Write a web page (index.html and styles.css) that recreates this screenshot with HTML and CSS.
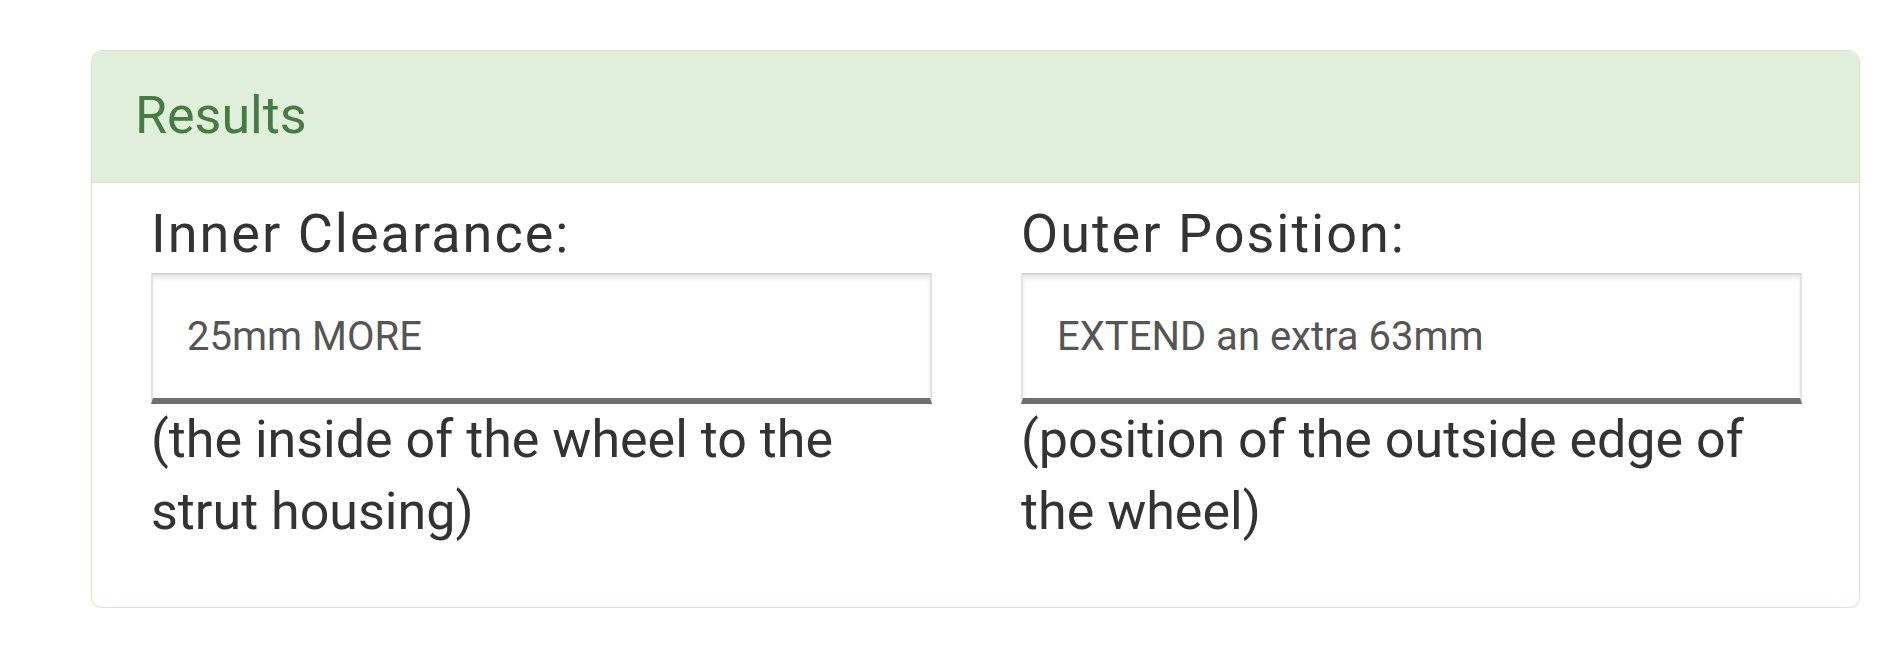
FILE: index.html
```html
<!DOCTYPE html>
<html lang="en">
<head>
    <meta charset="UTF-8">
    <meta name="viewport" content="width=device-width, initial-scale=1.0">
    <title>Results</title>
    <link rel="stylesheet" href="styles.css">
</head>
<body>
    <main>
        <section class="panel">
            <header class="panel-heading">
                <h3>Results</h3>
            </header>
            <div class="panel-body">
                <div class="field">
                    <label for="inner">Inner Clearance:</label>
                    <input type="text" id="inner" value="25mm MORE" readonly>
                    <p class="help">(the inside of the wheel to the strut housing)</p>
                </div>
                <div class="field">
                    <label for="outer">Outer Position:</label>
                    <input type="text" id="outer" value="EXTEND an extra 63mm" readonly>
                    <p class="help">(position of the outside edge of the wheel)</p>
                </div>
            </div>
        </section>
    </main>
</body>
</html>
```

FILE: styles.css
```css
*{
    box-sizing: border-box;
    margin: 0;
    padding: 0;
}
body{
    background-color: white;
    color: rgb(51, 51, 51);
    font-family: Roboto, "Liberation Sans", sans-serif;
}
main{
    padding: 50px 40px 0 91px;
}
.panel{
    border: 1px solid rgb(216, 230, 200);
    border-radius: 11px;
    box-shadow: 0 2px 2px rgba(0, 0, 0, 0.05);
    overflow: hidden;
}
.panel-heading{
    background-color: rgb(224, 239, 217);
    border-bottom: 1px solid rgb(214, 230, 198);
    padding: 34px 43px 36px;
}
.panel-heading h3{
    font-size: 52px;
    line-height: 61px;
    font-weight: 400;
    color: rgb(72, 122, 68);
}
.panel-body{
    display: grid;
    grid-template-columns: 1fr 1fr;
    gap: 89px;
    padding: 21px 57px 59px 59px;
}
.field{
    display: flex;
    flex-direction: column;
}
label{
    font-size: 54px;
    line-height: 59px;
    letter-spacing: 2px;
    margin-bottom: 10px;
}
input{
    height: 131px;
    border: 2px solid rgb(226, 226, 226);
    border-top-color: rgb(214, 214, 214);
    border-bottom: 6px solid rgb(112, 112, 112);
    box-shadow: inset 0 4px 4px rgba(0, 0, 0, 0.08);
    padding: 0 34px;
    font-family: Roboto, "Liberation Sans", sans-serif;
    font-size: 40px;
    color: rgb(85, 85, 85);
    background-color: white;
    outline: none;
}
.help{
    font-size: 52px;
    line-height: 72px;
}
```
